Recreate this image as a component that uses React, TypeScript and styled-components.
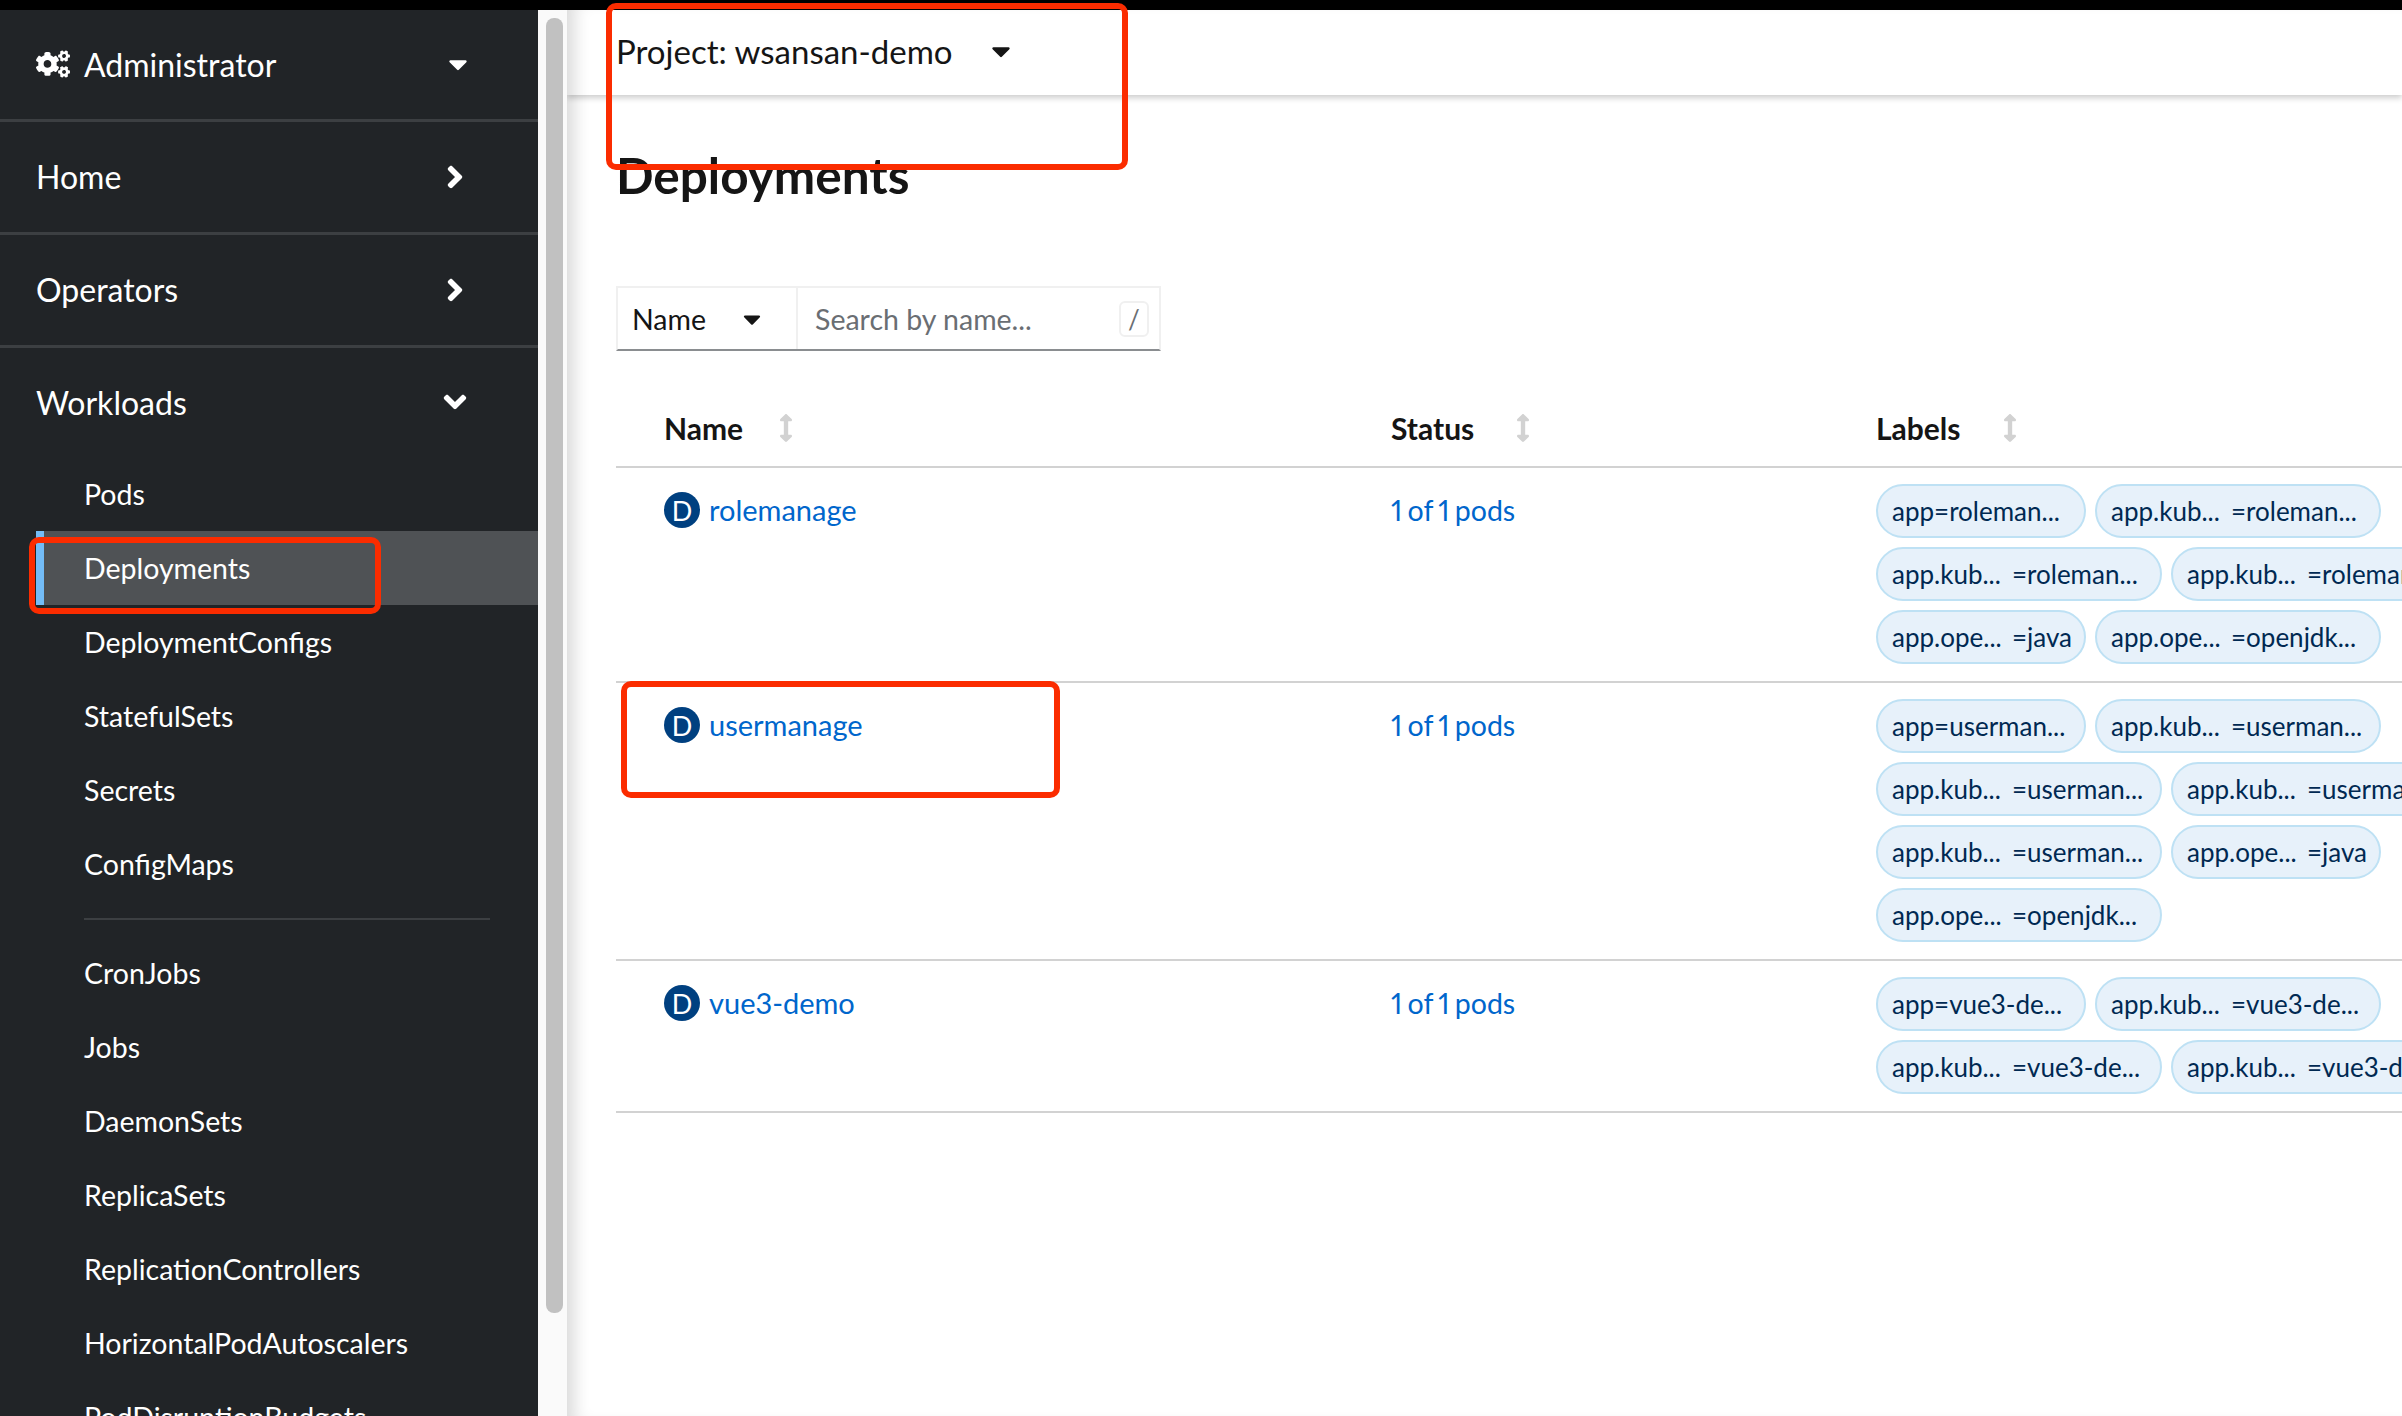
import React from 'react'
import styled, { createGlobalStyle } from 'styled-components'
import { FaAngleDown, FaAngleRight, FaArrowsAltV, FaCaretDown, FaCogs } from 'react-icons/fa'

const GlobalStyle = createGlobalStyle`
  html, body {
    margin: 0;
    padding: 0;
    height: 100%;
    background: #fff;
    overflow: hidden;
  }
  #root {
    height: 100%;
  }
  * {
    box-sizing: border-box;
  }
  body {
    font-family: Lato, "Open Sans", sans-serif;
    font-variant-numeric: proportional-nums;
  }
`

const Page = styled.div`
  position: relative;
  display: flex;
  flex-direction: column;
  height: 1416px;
  width: 2402px;
  overflow: hidden;
`
const TopStrip = styled.div`
  flex: 0 0 10px;
  background: #000;
`
const Body = styled.div`
  flex: 1;
  display: flex;
  min-height: 0;
`
const Sidebar = styled.nav`
  flex: 0 0 538px;
  background: #212427;
  color: #fff;
  overflow: hidden;
`
const SectionRow = styled.div<{ $height: number; $flat?: boolean }>`
  display: flex;
  align-items: center;
  justify-content: space-between;
  height: ${(p) => p.$height}px;
  padding: 0 65px 1px 36px;
  font-size: 32px;
  border-bottom: ${(p) => (p.$flat ? 'none' : '3px solid #3c3f42')};
  svg {
    display: block;
  }
`
const SectionLabel = styled.span`
  display: flex;
  align-items: center;
  gap: 14px;
`
const NavItem = styled.div<{ $active?: boolean }>`
  height: 74px;
  margin-left: 36px;
  padding-left: ${(p) => (p.$active ? 40 : 48)}px;
  display: flex;
  align-items: center;
  font-size: 28.5px;
  background: ${(p) => (p.$active ? '#4f5255' : 'transparent')};
  border-left: ${(p) => (p.$active ? '8px solid #73bcf7' : 'none')};
`
const NavDivider = styled.div`
  height: 2px;
  margin: 17px 48px 16px 84px;
  background: #3c3f42;
`
const ScrollTrack = styled.div`
  flex: 0 0 29px;
  padding: 8px 4px 0 8px;
  background: #fafafa;
`
const ScrollThumb = styled.div`
  height: 1295px;
  background: #c1c1c1;
  border-radius: 8px;
`
const Main = styled.main`
  flex: 1;
  min-width: 0;
  display: flex;
  flex-direction: column;
  overflow: hidden;
  box-shadow: inset 18px 0 16px -10px rgba(0, 0, 0, 0.14);
`
const ProjectBar = styled.header`
  flex: 0 0 85px;
  display: flex;
  align-items: center;
  gap: 33px;
  padding: 0 0 3px 49px;
  font-size: 33px;
  color: #151515;
  box-shadow: 0 3px 6px rgba(0, 0, 0, 0.2);
`
const Title = styled.h1`
  margin: 50px 0 0 49px;
  font-size: 49.5px;
  line-height: 60px;
  font-weight: 700;
  color: #151515;
`
const SearchGroup = styled.div`
  display: flex;
  width: 545px;
  height: 65px;
  margin: 81px 0 0 49px;
  border: 2px solid #f0f0f0;
  border-bottom-color: #8a8d90;
  font-size: 28.5px;
`
const FilterSelect = styled.div`
  flex: 0 0 180px;
  display: flex;
  align-items: center;
  gap: 32px;
  padding-left: 14px;
  color: #151515;
  border-right: 2px solid #f0f0f0;
`
const SearchBox = styled.div`
  flex: 1;
  display: flex;
  align-items: center;
  justify-content: space-between;
  padding: 0 10px 0 17px;
  color: #6a6e73;
`
const Kbd = styled.span`
  display: flex;
  align-items: center;
  justify-content: center;
  width: 30px;
  height: 36px;
  border: 2px solid #f0f0f0;
  border-radius: 6px;
  font-size: 26px;
  color: #6a6e73;
`
const TableWrap = styled.div`
  margin: 30px 0 0 49px;
`
const Row = styled.div<{ $head?: boolean }>`
  display: grid;
  grid-template-columns: 775px 485px 600px;
  width: 1786px;
  border-bottom: 2px solid #d2d2d2;
  ${(p) => (p.$head ? 'height: 87px; padding-top: 9px; align-items: center;' : '')}
`
const HeadCell = styled.div<{ $first?: boolean }>`
  display: flex;
  align-items: center;
  gap: ${(p) => (p.$first ? 29 : 35)}px;
  padding-left: ${(p) => (p.$first ? 48 : 0)}px;
  font-size: 30px;
  font-weight: 700;
  color: #151515;
`
const NameCell = styled.div`
  display: flex;
  align-items: flex-start;
  gap: 9px;
  padding: 24px 0 0 48px;
`
const Badge = styled.span`
  flex: 0 0 36px;
  width: 36px;
  height: 36px;
  border-radius: 50%;
  display: flex;
  align-items: center;
  justify-content: center;
  background: #004080;
  color: #fff;
  font-size: 27px;
`
const ResourceLink = styled.a`
  color: #06c;
  font-size: 29px;
  line-height: 36px;
`
const StatusCell = styled.div`
  padding-top: 24px;
  color: #06c;
  font-size: 28.5px;
  line-height: 36px;
  word-spacing: -2px;
`
const LabelCell = styled.div`
  display: flex;
  flex-wrap: wrap;
  gap: 9px;
  padding: 16px 0 17px;
  align-content: flex-start;
`
const Chip = styled.span<{ $wide?: boolean }>`
  display: flex;
  align-items: center;
  width: ${(p) => (p.$wide ? 286 : 210)}px;
  height: 54px;
  padding: 0 14px;
  border: 2px solid #bee1f4;
  border-radius: 27px;
  background: #e7f1fa;
  color: #002952;
  font-size: 26px;
  white-space: nowrap;
  overflow: hidden;
`
const ChipKey = styled.span`
  flex: 0 0 120px;
`
const Callout = styled.div<{ $x: number; $y: number; $w: number; $h: number }>`
  position: absolute;
  left: ${(p) => p.$x}px;
  top: ${(p) => p.$y}px;
  width: ${(p) => p.$w}px;
  height: ${(p) => p.$h}px;
  border: 6px solid #fb2c00;
  border-radius: 10px;
`

type Label = [string, string?]

const rows: { name: string; labels: Label[] }[] = [
  {
    name: 'rolemanage',
    labels: [
      ['app=roleman...'],
      ['app.kub...', '=roleman...'],
      ['app.kub...', '=roleman...'],
      ['app.kub...', '=roleman...'],
      ['app.ope...', '=java'],
      ['app.ope...', '=openjdk...'],
    ],
  },
  {
    name: 'usermanage',
    labels: [
      ['app=userman...'],
      ['app.kub...', '=userman...'],
      ['app.kub...', '=userman...'],
      ['app.kub...', '=userman...'],
      ['app.kub...', '=userman...'],
      ['app.ope...', '=java'],
      ['app.ope...', '=openjdk...'],
    ],
  },
  {
    name: 'vue3-demo',
    labels: [
      ['app=vue3-de...'],
      ['app.kub...', '=vue3-de...'],
      ['app.kub...', '=vue3-de...'],
      ['app.kub...', '=vue3-de...'],
    ],
  },
]

const workloads = ['Pods', 'Deployments', 'DeploymentConfigs', 'StatefulSets', 'Secrets', 'ConfigMaps']
const jobs = [
  'CronJobs',
  'Jobs',
  'DaemonSets',
  'ReplicaSets',
  'ReplicationControllers',
  'HorizontalPodAutoscalers',
  'PodDisruptionBudgets',
]

function App() {
  return (
    <>
      <GlobalStyle />
      <Page>
        <TopStrip />
        <Body>
          <Sidebar>
            <SectionRow $height={112}>
              <SectionLabel>
                <FaCogs size={34} />
                Administrator
              </SectionLabel>
              <FaCaretDown size={30} />
            </SectionRow>
            <SectionRow $height={113}>
              Home
              <FaAngleRight size={36} />
            </SectionRow>
            <SectionRow $height={113}>
              Operators
              <FaAngleRight size={36} />
            </SectionRow>
            <SectionRow $height={109} $flat>
              Workloads
              <FaAngleDown size={36} />
            </SectionRow>
            {workloads.map((item) => (
              <NavItem key={item} $active={item === 'Deployments'}>
                {item}
              </NavItem>
            ))}
            <NavDivider />
            {jobs.map((item) => (
              <NavItem key={item}>{item}</NavItem>
            ))}
          </Sidebar>
          <ScrollTrack>
            <ScrollThumb />
          </ScrollTrack>
          <Main>
            <ProjectBar>
              Project: wsansan-demo
              <FaCaretDown size={30} />
            </ProjectBar>
            <Title>Deployments</Title>
            <SearchGroup>
              <FilterSelect>
                Name
                <FaCaretDown size={28} />
              </FilterSelect>
              <SearchBox>
                Search by name...
                <Kbd>/</Kbd>
              </SearchBox>
            </SearchGroup>
            <TableWrap>
              <Row $head>
                <HeadCell $first>
                  Name <FaArrowsAltV size={28} color="#d2d2d2" />
                </HeadCell>
                <HeadCell>
                  Status <FaArrowsAltV size={28} color="#d2d2d2" />
                </HeadCell>
                <HeadCell>
                  Labels <FaArrowsAltV size={28} color="#d2d2d2" />
                </HeadCell>
              </Row>
              {rows.map((row) => (
                <Row key={row.name}>
                  <NameCell>
                    <Badge>D</Badge>
                    <ResourceLink>{row.name}</ResourceLink>
                  </NameCell>
                  <StatusCell>1 of 1 pods</StatusCell>
                  <LabelCell>
                    {row.labels.map(([key, value], i) =>
                      value ? (
                        <Chip key={i} $wide={value !== '=java'}>
                          <ChipKey>{key}</ChipKey>
                          {value}
                        </Chip>
                      ) : (
                        <Chip key={i}>{key}</Chip>
                      ),
                    )}
                  </LabelCell>
                </Row>
              ))}
            </TableWrap>
          </Main>
        </Body>
        <Callout $x={606} $y={3} $w={522} $h={167} />
        <Callout $x={29} $y={537} $w={352} $h={77} />
        <Callout $x={621} $y={681} $w={439} $h={117} />
      </Page>
    </>
  )
}

export default App
